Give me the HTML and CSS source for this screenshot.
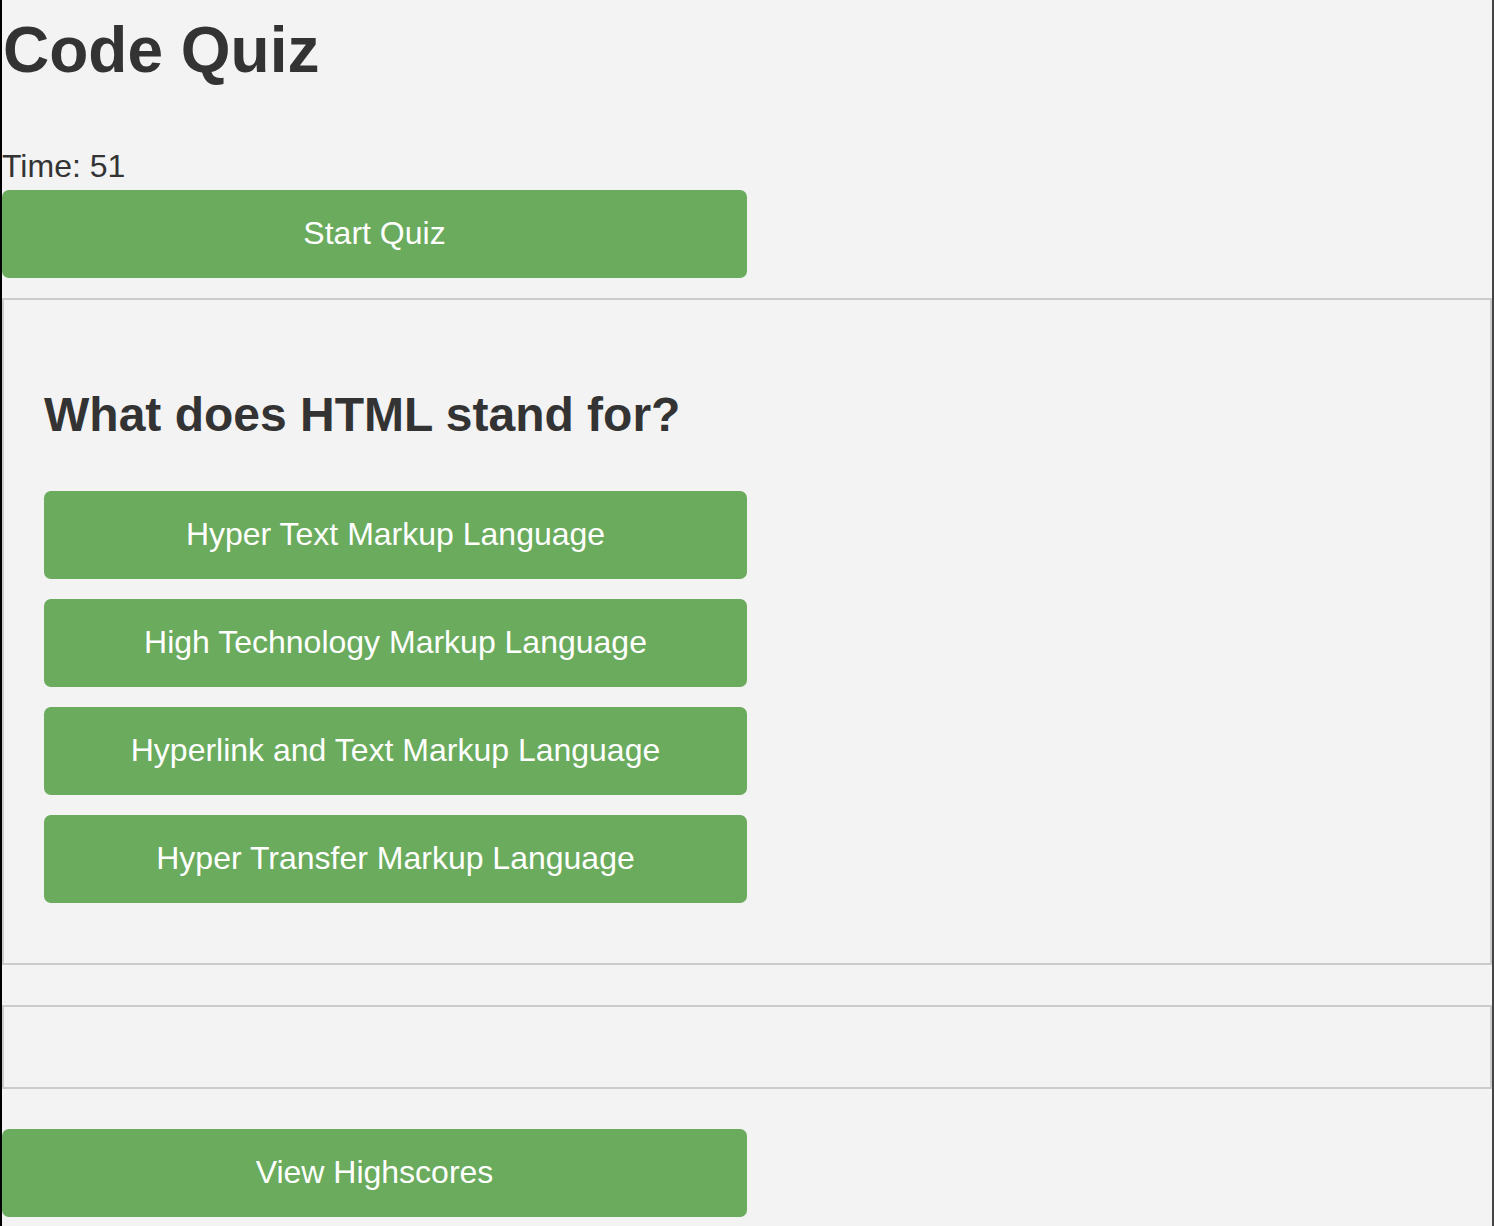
FILE: index.html
```html
<!DOCTYPE html>
<html lang="en">
<head>
<meta charset="utf-8">
<title>Code Quiz</title>
<link rel="stylesheet" href="styles.css">
</head>
<body>
  <header class="header">
    <h1 class="title">Code Quiz</h1>
    <p class="timer">Time: 51</p>
  </header>
  <button class="btn btn-start">Start Quiz</button>
  <section class="panel question-panel">
    <h2 class="question">What does HTML stand for?</h2>
    <div class="answers">
      <button class="btn">Hyper Text Markup Language</button>
      <button class="btn">High Technology Markup Language</button>
      <button class="btn">Hyperlink and Text Markup Language</button>
      <button class="btn">Hyper Transfer Markup Language</button>
    </div>
  </section>
  <section class="panel result-panel"></section>
  <button class="btn btn-scores">View Highscores</button>
</body>
</html>
```

FILE: styles.css
```css
html {
  background: #f3f3f3;
}

body {
  margin: 0;
  min-height: 1226px;
  box-sizing: border-box;
  border-left: 2px solid #000;
  border-right: 2px solid #454545;
  background: #f3f3f3;
  color: #333;
  font-family: "Liberation Sans", Arial, Helvetica, sans-serif;
  display: flow-root;
}

.header {
  display: flow-root;
}

.title {
  font-size: 64px;
  font-weight: bold;
  margin: 13px 0 58px 1px;
  line-height: normal;
}

.timer {
  font-size: 32px;
  margin: 0;
  padding-top: 3px;
  line-height: 37px;
  height: 42px;
}

.btn {
  display: block;
  width: 50%;
  height: 88px;
  margin: 0 0 20px 0;
  padding: 0 0 2px 0;
  border: none;
  border-radius: 7px;
  background: #6aab5d;
  color: #fff;
  font-family: "Liberation Sans", Arial, Helvetica, sans-serif;
  font-size: 32px;
  text-align: center;
  cursor: pointer;
}

.panel {
  border: 2px solid #cbcbcb;
  padding: 40px;
  margin: 0 0 40px 0;
}

.question {
  font-size: 48px;
  font-weight: bold;
  margin: 47px 0 48px 0;
  line-height: 56px;
}

.answers {
  display: flow-root;
}

.btn-scores {
  margin-bottom: 0;
}
```
